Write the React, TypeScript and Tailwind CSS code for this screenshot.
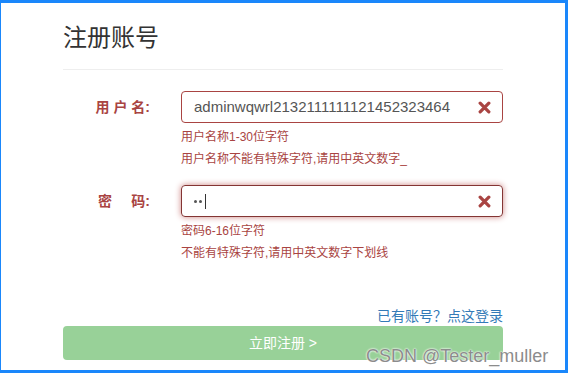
import React from "react";

const cjk = "font-['Liberation_Sans','Noto_Sans_CJK_SC',sans-serif]";

const RemoveIcon = () => (
  <svg width="13" height="13" viewBox="0 0 12 12" className="shrink-0">
    <path
      d="M2 2 L10 10 M10 2 L2 10"
      stroke="#a94442"
      strokeWidth="3"
      strokeLinecap="round"
    />
  </svg>
);

const FieldRow = ({ label, children, hints, focused }: any) => (
  <div className="flex">
    <div className="w-[118px] h-[32px] pr-[31px] flex items-center justify-end text-[14px] font-bold text-[#a94442] whitespace-pre">
      {label}
    </div>
    <div className="flex-1">
      <div
        className={`h-[32px] flex items-center justify-between pl-[12px] pr-[11px] rounded-[4px] border ${
          focused
            ? "border-[#843534] shadow-[0_0_6px_#ce8483]"
            : "border-[#a94442]"
        }`}
      >
        {children}
        <RemoveIcon />
      </div>
      <div className="mt-[3px] text-[12px] leading-[22px] text-[#a94442]">
        {hints.map((h: string) => (
          <div key={h}>{h}</div>
        ))}
      </div>
    </div>
  </div>
);

export default function App() {
  return (
    <div
      className={`relative w-[568px] h-[373px] bg-white border-t-[3px] border-l border-r-[3px] border-b-[3px] border-[#1a87fb] ${cjk} overflow-hidden`}
    >
      <div className="ml-[62px] w-[440px]">
        <div className="mt-[22px] text-[24px] leading-[26px] text-[#333]">
          注册账号
        </div>
        <div className="mt-[18px] h-px bg-[#eee]" />

        <div className="mt-[21px]">
          <FieldRow
            label="用 户 名:"
            hints={["用户名称1-30位字符", "用户名称不能有特殊字符,请用中英文数字_"]}
          >
            <span className="text-[15px] text-[#555]">
              adminwqwrl2132111111121452323464
            </span>
          </FieldRow>
        </div>

        <div className="mt-[15px]">
          <FieldRow
            label={"密     码:"}
            focused
            hints={["密码6-16位字符", "不能有特殊字符,请用中英文数字下划线"]}
          >
            <span className="flex items-center gap-[2px]">
              <span className="w-[3px] h-[3px] rounded-full bg-[#555]" />
              <span className="w-[3px] h-[3px] rounded-full bg-[#555]" />
              <span className="ml-[1px] w-px h-[15px] bg-[#333]" />
            </span>
          </FieldRow>
        </div>

        <div className="mt-[42px] text-right text-[14px] leading-[20px] text-[#337ab7]">
          已有账号？点这登录
        </div>

        <div className="h-[34px] rounded-[4px] bg-[#98d198] flex items-center justify-center text-white text-[14px]">
          立即注册 &gt;
        </div>
      </div>

      <div className="absolute left-[365px] top-[341px] text-[18px] leading-[24px] text-[#8c8c8c] [text-shadow:0_0_2px_#fff,0_0_2px_#fff] font-['Liberation_Sans',sans-serif]">
        CSDN @Tester_muller
      </div>
    </div>
  );
}
